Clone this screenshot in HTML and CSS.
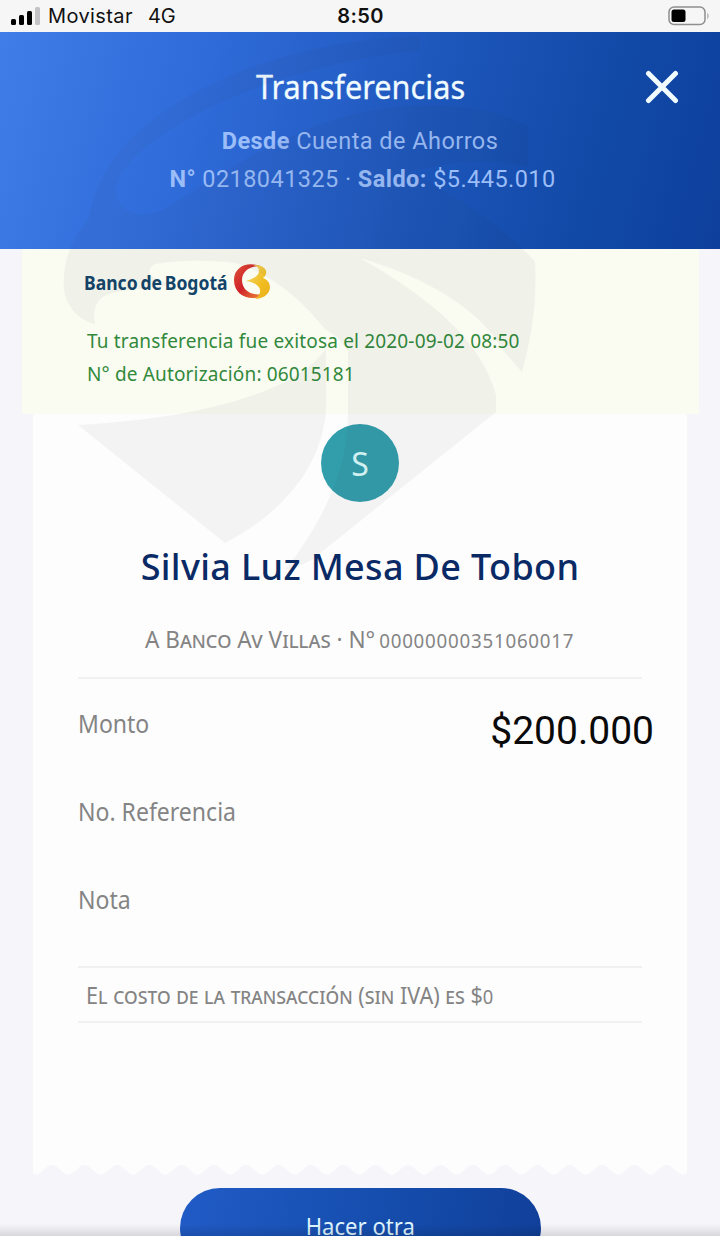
FILE: index.html
```html
<!DOCTYPE html>
<html lang="es">
<head>
	<meta charset="UTF-8">
	<title>Transferencias</title>
	<link rel="stylesheet" href="styles.css">
</head>
<body>
	<div class="status">
		<div class="carrier">
			<svg width="31" height="19" viewBox="0 0 31 19">
				<rect x="0" y="12" width="5" height="6" rx="1.5"/>
				<rect x="8" y="8" width="5" height="10" rx="1.5"/>
				<rect x="16" y="4" width="5" height="14" rx="1.5"/>
				<rect x="24" y="0" width="5" height="18" rx="1.5" fill="#c4c4c6"/>
			</svg>
			<span class="operator">Movistar</span>
			<span class="network">4G</span>
		</div>
		<span class="time">8:50</span>
		<svg class="battery" width="42" height="20" viewBox="0 0 42 20">
			<rect x="1" y="1" width="36" height="17.500" rx="5" fill="none" stroke="#8f8f92" stroke-width="1.500"/>
			<rect x="3.500" y="3.500" width="14" height="12.500" rx="2.500"/>
			<path d="M39.500 6.500q2 3.500 0 7z" fill="#8f8f92"/>
		</svg>
	</div>

	<div class="header">
		<h1><span>Transferencias</span></h1>
		<svg class="close" width="34" height="34" viewBox="0 0 34 34">
			<path d="M3.500 3.500l27 27M30.500 3.500l-27 27"/>
		</svg>
		<p class="from"><b>Desde</b> Cuenta de Ahorros</p>
		<p class="account"><b>N°</b> 0218041325 · <b>Saldo:</b> $5.445.010</p>
	</div>

	<div class="notice">
		<div class="brand">
			<span>Banco de Bogotá</span>
			<svg width="38" height="38" viewBox="0 0 38 38">
				<defs>
					<linearGradient id="red" x1="0" y1="0" x2="1" y2="1">
						<stop offset="0" stop-color="#dd5038"/>
						<stop offset="0.500" stop-color="#cf2229"/>
						<stop offset="1" stop-color="#ee8a34"/>
					</linearGradient>
					<linearGradient id="gold" x1="0" y1="0" x2="1" y2="1">
						<stop offset="0" stop-color="#f4dc74"/>
						<stop offset="0.600" stop-color="#f0bd20"/>
						<stop offset="1" stop-color="#edae1f"/>
					</linearGradient>
				</defs>
				<path fill="url(#red)" d="M27 3C14-2 1 4 1 17c0 11 8 18 19 18 4 0 7-1 9-4-11 2-20-4-20-14C9 9 16 3 27 3z"/>
				<path fill="url(#gold)" d="M20 2c10-1 16 5 12 11l-2 2c5 2 7 5 7 10-1 7-8 11-15 11 5-3 7-9 3-13-3-3-7-4-12-5 7-2 13-5 13-10 0-3-2-5-6-6z"/>
			</svg>
		</div>
		<p class="done">Tu transferencia fue exitosa el 2020-09-02 08:50</p>
		<p class="auth">N° de Autorización: 06015181</p>
	</div>

	<div class="card">
		<div class="avatar">S</div>
		<h2><span>Silvia Luz Mesa De Tobon</span></h2>
		<p class="bank"><span>A Banco Av Villas · N° <small>00000000351060017</small></span></p>
		<div class="row">
			<span class="label">Monto</span>
			<span class="amount">$200.000</span>
		</div>
		<div class="row"><span class="label">No. Referencia</span></div>
		<div class="row"><span class="label">Nota</span></div>
		<p class="cost"><span>El costo de la transacción <big>(</big>sin IVA<big>)</big> es $<small>0</small></span></p>
	</div>
	<svg class="teeth" width="654" height="12">
		<defs>
			<pattern id="tooth" x="3" width="32.350" height="12" patternUnits="userSpaceOnUse">
				<path d="M0 0h32.350v12C25 10 22 2 16.200 2S7 10 0 12z" fill="#fdfdfe"/>
			</pattern>
		</defs>
		<rect width="654" height="12" fill="url(#tooth)"/>
	</svg>

	<a class="again"><span>Hacer otra</span></a>
	<div class="shade"></div>

	<svg class="watermark" width="720" height="600" viewBox="0 0 720 600">
		<path d="M420 36C300 40 190 80 130 140c-25 25-35 50-42 80-18 20-26 45-24 70 3 18 15 30 31 34-3-16 2-26 14-30 16-5 40-5 68-10-25-3-35-12-22-20 25-4 55-4 80-1 35 10 65 35 90 66l12 8 11 14v62c0 52-20 102-63 157 14-3 28-9 39-20l172-138v-17c-15-55-66-97-136-137 62 18 120 50 143 92l19 22c10-37 15-70 13-110-25-30-75-65-125-90 45-12 80-14 118-5v-40c-48-27-118-27-178-12-90 25-160 82-190 96-20 8-45 2-44-23C120 148 240 70 420 50z"/>
		<path d="M78 425c86-5 155-18 205-42 20-10 34-22 43-34v62c-5 56-42 101-101 132z"/>
	</svg>
</body>
</html>
```

FILE: styles.css
```css
*{
	padding: 0;
	margin: 0;
	box-sizing: border-box;
}
body{
	width: 720px;
	height: 1236px;
	overflow: hidden;
	position: relative;
	background: #f5f5fa;
	font-family: "Noto Sans", sans-serif;
	color: #848484;
}
p, h1, h2, span{
	white-space: nowrap;
}
h1 span, h2 span, .bank span, .cost span, .label, .again span, .brand span{
	display: inline-block;
}
.status{
	height: 32px;
	padding: 0 10px 0 11px;
	display: grid;
	grid-template-columns: 1fr auto 1fr;
	align-items: center;
	font: 20px/32px Inter, sans-serif;
	color: #111;
	background: #f6f6f7;
}
.carrier{
	display: flex;
	align-items: center;
}
.operator{
	margin-left: 6px;
	letter-spacing: 0.4px;
}
.network{
	margin-left: 15px;
}
.time{
	font-weight: 600;
	letter-spacing: 0.4px;
}
.battery{
	justify-self: end;
}
.header{
	position: relative;
	height: 217px;
	padding-top: 31px;
	text-align: center;
	font-family: Roboto, sans-serif;
	font-size: 23.5px;
	color: #9bbdf8;
	background: linear-gradient(105deg, #417de8 0%, #2f6bd9 28%, #1f58bd 56%, #124ba9 78%, #0e3f9d 100%);
}
h1{
	font: 400 33px/48px "Noto Sans", sans-serif;
	color: #f0fbff;
}
h1 span{
	transform: scaleX(0.93);
	-webkit-text-stroke: 0.3px #f0fbff;
}
.close{
	position: absolute;
	right: 41px;
	top: 38px;
	fill: none;
	stroke: #f2fcff;
	stroke-width: 5;
	stroke-linecap: round;
}
.from{
	margin-top: 11px;
	line-height: 38px;
	letter-spacing: 0.45px;
}
.account{
	padding-left: 5px;
	line-height: 38px;
	letter-spacing: 0.44px;
}
.notice{
	width: 677px;
	height: 165px;
	margin-left: 22px;
	padding: 14px 0 0 65px;
	background: #fafcf2;
	color: #32893c;
	font-size: 19px;
}
.brand{
	height: 38px;
	margin-left: -3px;
	display: flex;
	align-items: center;
	color: #124469;
}
.brand span{
	width: 149px;
	font-size: 19.5px;
	font-weight: 700;
	word-spacing: -2px;
	transform: scaleX(0.9);
	transform-origin: left;
}
.done{
	margin-top: 24px;
	line-height: 33px;
	letter-spacing: 0.17px;
}
.auth{
	line-height: 33px;
	letter-spacing: 0.15px;
}
.card{
	width: 654px;
	height: 749px;
	margin-left: 33px;
	padding: 10px 45px 0;
	background: #fdfdfe;
}
.avatar{
	width: 78px;
	height: 78px;
	margin: 0 auto;
	border-radius: 50%;
	background: #339eab;
	color: #d8fafa;
	font-size: 32px;
	line-height: 80px;
	text-align: center;
}
h2{
	margin-top: 36px;
	font-size: 36px;
	font-weight: 500;
	line-height: 58px;
	letter-spacing: 0.35px;
	text-align: center;
	color: #0a2a66;
}
.bank{
	height: 83px;
	border-bottom: 2px solid #f0f0f1;
	font-size: 23.5px;
	font-variant: small-caps;
	line-height: 86px;
	text-align: center;
}
.bank span{
	transform: scaleX(0.96);
	margin: 0 -40px;
}
small{
	font-size: 19.5px;
}
.bank small{
	margin-left: -2px;
	letter-spacing: 0.8px;
}
.row{
	height: 88px;
	display: flex;
	justify-content: space-between;
	align-items: center;
}
.label{
	font-size: 24.5px;
	transform: scaleX(0.94);
	transform-origin: left;
}
.amount{
	margin: 15px -12px 0 0;
	font-family: Roboto, sans-serif;
	font-size: 39px;
	color: #0a0a0a;
}
.cost{
	height: 57px;
	margin-top: 23px;
	padding-left: 8px;
	border-top: 2px solid #f0f0f1;
	border-bottom: 2px solid #f0f0f1;
	font-size: 23px;
	font-variant: small-caps;
	line-height: 54px;
}
.cost span{
	transform: scaleX(0.94);
	transform-origin: left;
}
.cost big{
	font-size: 23px;
	font-variant: normal;
}
.teeth{
	display: block;
	margin-left: 33px;
}
.again{
	display: block;
	width: 361px;
	height: 80px;
	margin: 13px auto 0;
	border-radius: 40px;
	background: linear-gradient(100deg, #215bc6, #164fb0 50%, #103f99);
	color: #dff5ff;
	font-size: 24px;
	line-height: 75px;
	text-align: center;
}
.again span{
	transform: scaleX(0.92);
}
.shade{
	position: absolute;
	left: 0;
	right: 0;
	bottom: 0;
	height: 12px;
	background: linear-gradient(rgba(0,0,0,0), rgba(0,0,0,0.12));
}
/* bank emblem laid over the whole receipt */
.watermark{
	position: absolute;
	left: 0;
	top: 0;
	fill: #30303a;
	opacity: 0.045;
	pointer-events: none;
}
```
